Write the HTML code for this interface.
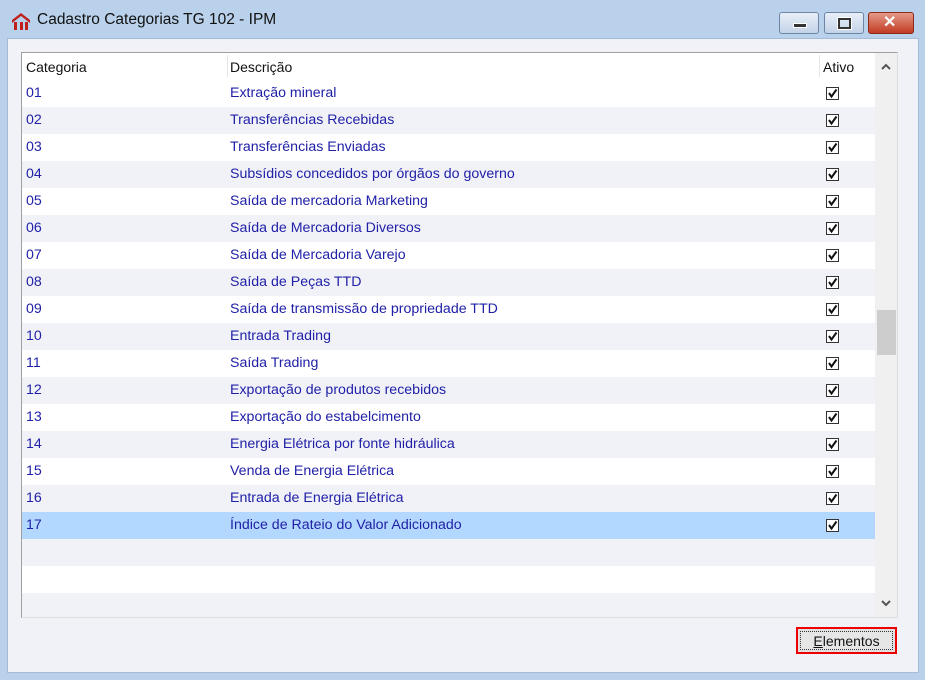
<html><head><style>
body{margin:0;width:925px;height:680px;background:#b9d1ea;font-family:"Liberation Sans",sans-serif;position:relative;overflow:hidden}
.title{position:absolute;left:37px;top:11px;font-size:15.5px;color:#111}
.client{position:absolute;left:7px;top:38px;width:910px;height:633px;background:#f1f2f8;border:1px solid #a5bcd6}
.grid{position:absolute;left:21px;top:52px;width:875px;height:564px;background:#fff;border:1px solid #a0a0a0;border-right-color:#ddd;border-bottom-color:#ddd;overflow:hidden}
.row{position:absolute;left:0;width:853px;height:27px;font-size:14.2px;color:#2121a8}
.row span{position:absolute;top:5px}
.g{background:#f1f2f8}.s{background:#b3d8ff}
.cb{position:absolute;left:804px;top:7px;width:11px;height:11px;border:1px solid #333;background:#fff}
.cb svg{position:absolute;left:0;top:0}
.hdr{position:absolute;top:0;height:27px;font-size:14px;color:#111}
.sb{position:absolute;left:853px;top:0;width:22px;height:564px;background:#f0f0f0}
.btn{position:absolute;left:796px;top:627px;width:101px;height:27px;border:2px solid #ee0000;box-sizing:border-box;background:#e0e0e0}
.btn div{position:absolute;left:2px;top:2px;right:2px;bottom:2px;border:1px dotted #333;background:#e6e6e6;font-size:14px;text-align:center;line-height:18px;color:#111}
.wb{position:absolute;top:12px;height:20px;border:1px solid #6d86a6;border-radius:3px;background:linear-gradient(#e8eff8,#c3d3e8)}
</style></head><body>
<svg style="position:absolute;left:11px;top:11px" width="20" height="20" viewBox="0 0 20 20"><path d="M1 9 L10 2 L19 9 L19 12 L10 5 L1 12Z" fill="#c0201c"/><rect x="3" y="11" width="3" height="8" fill="#c0201c"/><rect x="9" y="11" width="3" height="8" fill="#c0201c"/><rect x="14" y="11" width="3" height="8" fill="#c0201c"/></svg>
<div class="title">Cadastro Categorias TG 102 - IPM</div>
<div class="wb" style="left:779px;width:38px"><div style="position:absolute;left:13px;top:10px;width:12px;height:3px;background:#333;border:1px solid #fff"></div></div>
<div class="wb" style="left:824px;width:38px"><div style="position:absolute;left:13px;top:5px;width:9px;height:7px;border:2px solid #333;outline:1px solid #fff"></div></div>
<div class="wb" style="left:868px;width:44px;background:linear-gradient(#e49a88,#c23b22);border-color:#8a2a18"><div style="position:absolute;left:14px;top:-1px;color:#fff;font-weight:bold;font-size:16px">✕</div></div>
<div class="client"></div>
<div class="grid">
<div class="hdr" style="left:4px;top:6px">Categoria</div>
<div class="hdr" style="left:208px;top:6px">Descrição</div>
<div class="hdr" style="left:801px;top:6px">Ativo</div>
<div style="position:absolute;left:205px;top:2px;width:1px;height:22px;background:#e5e5e5"></div>
<div style="position:absolute;left:797px;top:2px;width:1px;height:22px;background:#e5e5e5"></div>
<div id="rows"></div>
<div class="sb"><svg style="position:absolute;left:6px;top:10px" width="10" height="7"><path d="M1 6 L5 2 L9 6" stroke="#555" stroke-width="2" fill="none"/></svg><div style="position:absolute;left:2px;top:257px;width:19px;height:45px;background:#cdcdcd"></div><svg style="position:absolute;left:6px;top:547px" width="10" height="7"><path d="M1 1 L5 5 L9 1" stroke="#555" stroke-width="2" fill="none"/></svg></div>
</div>
<div class="btn"><div><u>E</u>lementos</div></div>
<script>
var d=["Extração mineral","Transferências Recebidas","Transferências Enviadas","Subsídios concedidos por órgãos do governo","Saída de mercadoria Marketing","Saída de Mercadoria Diversos","Saída de Mercadoria Varejo","Saída de Peças TTD","Saída de transmissão de propriedade TTD","Entrada Trading","Saída Trading","Exportação de produtos recebidos","Exportação do estabelcimento","Energia Elétrica por fonte hidráulica","Venda de Energia Elétrica","Entrada de Energia Elétrica","Índice de Rateio do Valor Adicionado"];
var h="";
for(var i=0;i<20;i++){var c=i==16?"s":(i%2?"g":"");
if(i>16)c=(i==18)?"":"g";
h+='<div class="row '+c+'" style="top:'+(27+27*i)+'px">';
if(i<17)h+='<span style="left:4px">'+(i<9?"0":"")+(i+1)+'</span><span style="left:208px">'+d[i]+'</span><div class="cb"><svg width="11" height="11"><path d="M2 5 L4.5 8.5 L9.5 1.5" stroke="#111" stroke-width="2" fill="none"/></svg></div>';
h+='</div>';}
document.getElementById("rows").innerHTML=h;
</script>
</body></html>
